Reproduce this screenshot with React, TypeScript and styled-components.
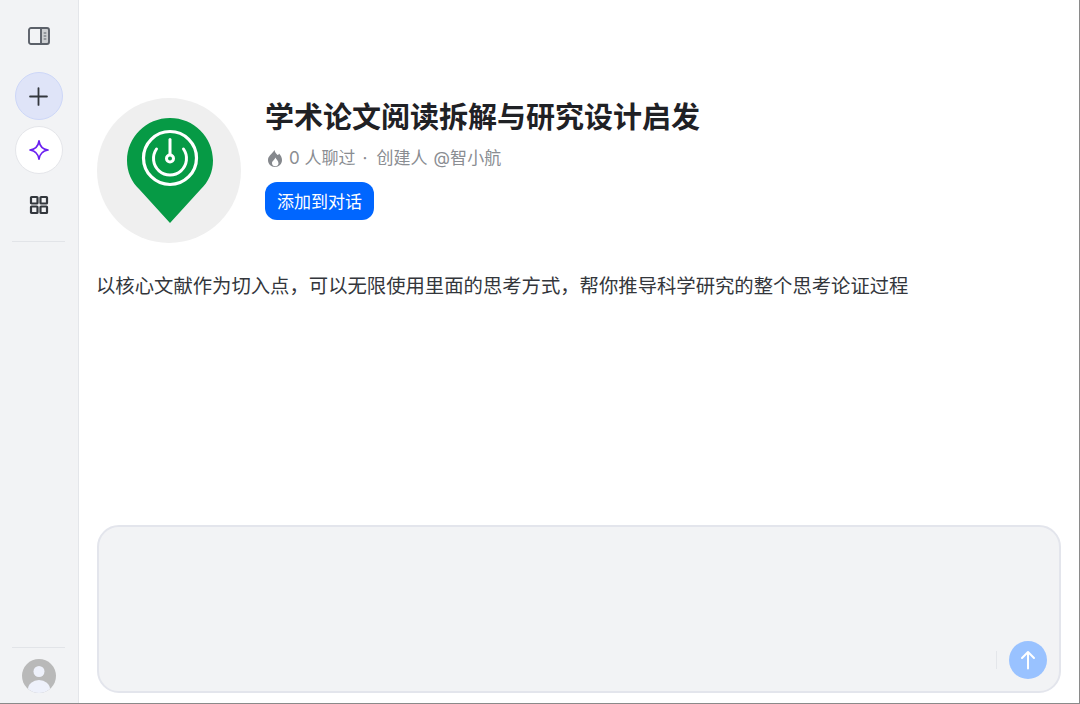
import React from "react";
import styled, { createGlobalStyle } from "styled-components";
import { FiPlus } from "react-icons/fi";

const GlobalStyle = createGlobalStyle`
  html, body {
    margin: 0;
    padding: 0;
    background: #fff;
  }
  body {
    font-family: "Inter", "Noto Sans CJK SC", sans-serif;
  }
`;

const Page = styled.div`
  display: flex;
  width: 1080px;
  height: 704px;
  box-sizing: border-box;
  border-right: 1px solid #8a8a8a;
  border-bottom: 1px solid #8a8a8a;
  overflow: hidden;
`;

const Sidebar = styled.aside`
  width: 79px;
  flex-shrink: 0;
  box-sizing: border-box;
  background: #f2f3f5;
  border-right: 1px solid #e4e6ea;
  display: flex;
  flex-direction: column;
  align-items: center;
  padding: 18px 1px 0 0;
`;

const IconSlot = styled.div`
  width: 48px;
  height: 36px;
  display: flex;
  align-items: center;
  justify-content: center;
  color: #5b6069;
`;

const RoundButton = styled.button<{ $variant: "accent" | "plain" }>`
  width: 48px;
  height: 48px;
  border-radius: 50%;
  padding: 0;
  box-sizing: border-box;
  display: flex;
  align-items: center;
  justify-content: center;
  border: 1px solid ${(p) => (p.$variant === "accent" ? "#cdd7f8" : "#e5e6ea")};
  background: ${(p) => (p.$variant === "accent" ? "#dfe4f8" : "#fff")};
  color: #33373d;
  font-size: 29px;
`;

const TopGroup = styled.div`
  display: flex;
  flex-direction: column;
  align-items: center;
  gap: 6px;
  margin-top: 18px;
`;

const Divider = styled.div`
  width: 53px;
  height: 1px;
  background: #e2e4e8;
`;

const AppsSlot = styled(IconSlot)`
  margin-top: 13px;
  margin-bottom: 18px;
  color: #33373d;
`;

const SidebarFoot = styled.div`
  margin-top: auto;
  display: flex;
  flex-direction: column;
  align-items: center;
  gap: 11px;
  padding-bottom: 10px;
`;

const UserAvatar = styled.div`
  width: 34px;
  height: 34px;
  border-radius: 50%;
  overflow: hidden;
  background: #b9b9b9;
`;

const Main = styled.main`
  flex: 1;
  min-width: 0;
  display: flex;
  flex-direction: column;
  padding: 98px 18px 10px;
`;

const Header = styled.header`
  display: flex;
  gap: 24px;
`;

const Logo = styled.div`
  width: 144px;
  height: 145px;
  box-sizing: border-box;
  padding-left: 1px;
  border-radius: 50%;
  background: #efefef;
  flex-shrink: 0;
  display: flex;
  align-items: center;
  justify-content: center;
`;

const Info = styled.div`
  display: flex;
  flex-direction: column;
  align-items: flex-start;
`;

const Title = styled.h1`
  margin: 1px 0 0;
  font-size: 29px;
  line-height: 38px;
  font-weight: 700;
  color: #1f2125;
`;

const Meta = styled.div`
  display: flex;
  align-items: center;
  margin-top: 10px;
  padding-left: 3px;
  font-size: 17px;
  line-height: 22px;
  color: #8a8d92;
`;

const MetaCount = styled.span`
  margin-left: 7px;
  white-space: pre;
`;

const MetaDot = styled.span`
  margin: 0 9px 0 7px;
`;

const MetaAuthor = styled.span`
  word-spacing: 1px;
  letter-spacing: 0.1px;
`;

const AddButton = styled.button`
  margin-top: 13px;
  height: 38px;
  width: 109px;
  padding: 0 0 2px;
  border: none;
  border-radius: 12px;
  background: #0066ff;
  color: #fff;
  font-family: inherit;
  font-size: 17px;
`;

const Description = styled.p`
  margin: 29px 0 0 -1px;
  font-size: 19.35px;
  line-height: 28px;
  color: #33363b;
`;

const Composer = styled.div`
  margin-top: auto;
  height: 168px;
  box-sizing: border-box;
  border: 2px solid #e3e5ec;
  border-radius: 22px;
  background: #f2f3f5;
  display: flex;
  align-items: flex-end;
  justify-content: flex-end;
  padding: 0 12px 12px 0;
`;

const Separator = styled.div`
  width: 1px;
  height: 18px;
  background: #e4e6ea;
  margin: 0 12px 10px 0;
`;

const SendButton = styled.button`
  width: 38px;
  height: 38px;
  padding: 0;
  border: none;
  border-radius: 50%;
  background: #99c2ff;
  display: flex;
  align-items: center;
  justify-content: center;
`;

const PanelIcon = () => (
  <svg width="22" height="18" viewBox="0 0 22 18" fill="none">
    <rect x="1" y="1" width="20" height="16" rx="2" stroke="currentColor" strokeWidth="1.9" />
    <rect x="13" y="1" width="8" height="16" fill="currentColor" opacity="0.25" />
    <path d="M13 1v16" stroke="currentColor" strokeWidth="1.9" />
    <path d="M15.700 6h2.600M15.700 9h2.600M15.700 12h2.600" stroke="currentColor" strokeWidth="1.100" />
  </svg>
);

const SparkIcon = () => (
  <svg width="22" height="22" viewBox="0 0 22 22" fill="none">
    <path
      d="M11 1.800C11.700 7 14.800 10.200 20 11 14.800 11.800 11.700 15 11 20.200 10.300 15 7.200 11.800 2 11 7.200 10.200 10.300 7 11 1.800Z"
      stroke="#6a1ff0"
      strokeWidth="1.700"
      strokeLinejoin="round"
    />
  </svg>
);

const AppsIcon = () => (
  <svg width="20" height="20" viewBox="0 0 20 20" fill="none" stroke="currentColor" strokeWidth="2.200">
    <rect x="2" y="2" width="6.500" height="6.500" rx="0.6" />
    <rect x="11.500" y="2" width="6.500" height="6.500" rx="0.6" />
    <rect x="2" y="11.500" width="6.500" height="6.500" rx="0.6" />
    <rect x="11.500" y="11.500" width="6.500" height="6.500" rx="0.6" />
  </svg>
);

const PersonIcon = () => (
  <svg width="34" height="34" viewBox="0 0 34 34">
    <circle cx="17" cy="12.500" r="5.500" fill="#eef1fb" />
    <ellipse cx="17" cy="30" rx="11" ry="9" fill="#eef1fb" />
  </svg>
);

const ArrowUpIcon = () => (
  <svg width="16" height="20" viewBox="0 0 16 20" fill="none" stroke="#fff" strokeWidth="2" strokeLinecap="round" strokeLinejoin="round">
    <path d="M8 18.500V2M2 8l6-6 6 6" />
  </svg>
);

const PinLogo = () => (
  <svg width="86" height="106" viewBox="0 0 86 106" fill="none">
    <path
      d="M43 0C19.300 0 0 19 0 42.500 0 54 4.500 64 12.500 71.500L43 105l30.500-33.500C81.500 64 86 54 86 42.500 86 19 66.700 0 43 0Z"
      fill="#069a45"
    />
    <circle cx="43" cy="40" r="26.500" stroke="#fff" strokeWidth="3.200" />
    <path d="M29.500 31A16.500 16.500 0 1 0 56.500 31" stroke="#fff" strokeWidth="3" strokeLinecap="round" />
    <path d="M43 21.500V36" stroke="#fff" strokeWidth="3" strokeLinecap="round" />
    <circle cx="43" cy="40.500" r="3.500" stroke="#fff" strokeWidth="3" />
  </svg>
);

const FlameIcon = () => (
  <svg width="14" height="17" viewBox="0 0 14 17">
    <path
      d="M6.500 0c.5 2.500 1.800 3.700 3 5.100C10.900 4.600 11 3.800 11 3.400 12.800 5.200 14 7.600 14 10 14 14 11 17 7 17S0 14 0 10C0 6 3.900 4.300 6.500 0Z"
      fill="#85888d"
    />
    <path
      d="M7.500 7.500c.4 1.900 3 3.200 3 5.700 0 1.800-1.500 3-3.300 3-1.700 0-3.200-1.200-3.200-3 0-2.400 2.700-3.200 3.500-5.700Z"
      fill="#fff"
    />
  </svg>
);

export default function App() {
  return (
    <>
      <GlobalStyle />
      <Page>
        <Sidebar>
          <IconSlot>
            <PanelIcon />
          </IconSlot>
          <TopGroup>
            <RoundButton $variant="accent">
              <FiPlus strokeWidth={1.5} />
            </RoundButton>
            <RoundButton $variant="plain">
              <SparkIcon />
            </RoundButton>
          </TopGroup>
          <AppsSlot>
            <AppsIcon />
          </AppsSlot>
          <Divider />
          <SidebarFoot>
            <Divider />
            <UserAvatar>
              <PersonIcon />
            </UserAvatar>
          </SidebarFoot>
        </Sidebar>
        <Main>
          <Header>
            <Logo>
              <PinLogo />
            </Logo>
            <Info>
              <Title>学术论文阅读拆解与研究设计启发</Title>
              <Meta>
                <FlameIcon />
                <MetaCount>0 人聊过</MetaCount>
                <MetaDot>·</MetaDot>
                <MetaAuthor>创建人 @智小航</MetaAuthor>
              </Meta>
              <AddButton>添加到对话</AddButton>
            </Info>
          </Header>
          <Description>以核心文献作为切入点，可以无限使用里面的思考方式，帮你推导科学研究的整个思考论证过程</Description>
          <Composer>
            <Separator />
            <SendButton>
              <ArrowUpIcon />
            </SendButton>
          </Composer>
        </Main>
      </Page>
    </>
  );
}
